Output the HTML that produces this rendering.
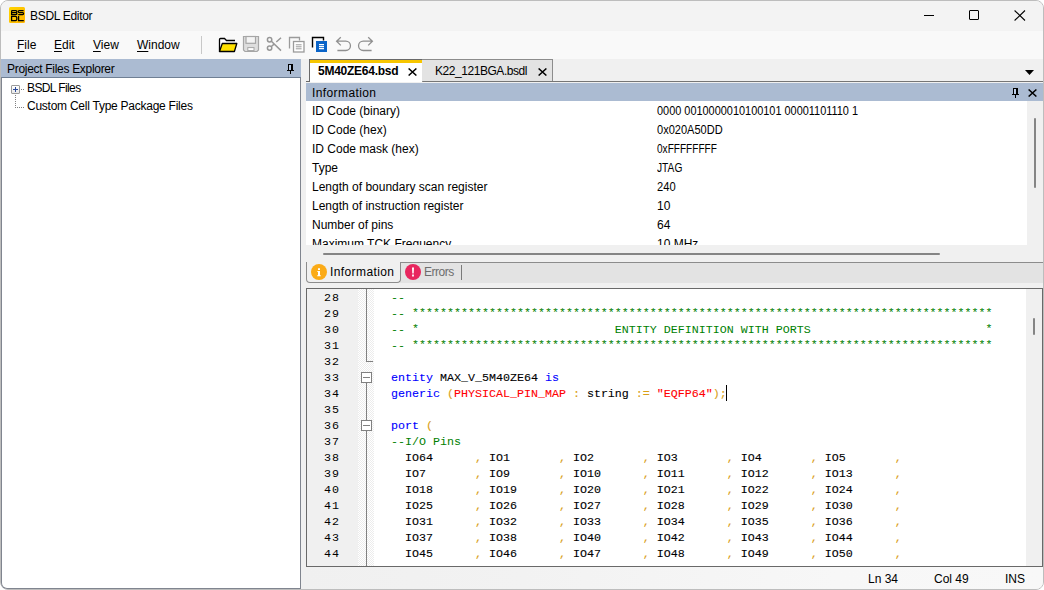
<!DOCTYPE html>
<html><head><meta charset="utf-8">
<style>
*{margin:0;padding:0;box-sizing:border-box}
html,body{width:1044px;height:590px;overflow:hidden;background:#fff}
body{font-family:"Liberation Sans",sans-serif;font-size:12px;color:#000;position:relative}
.a{position:absolute}
.t{position:absolute;white-space:nowrap;line-height:14px}
#win{left:0;top:0;width:1044px;height:590px;background:#f0f0f0;border:1px solid #bdbdbd;border-radius:8px;overflow:hidden}
#title{left:0;top:0;width:1044px;height:30px;background:#f3f3f3}
#menu{left:0;top:30px;width:1044px;height:28px;background:#f9f9f9}
.u{text-decoration:underline;text-underline-offset:1.5px}
.hdr{background:#abbbd2}
.mono{font-family:"Liberation Mono",monospace}
.code{font-size:11.67px;line-height:16px;color:#000;-webkit-text-stroke:0.1px}
.ln{-webkit-text-stroke:0}
.st{position:relative;top:-1px}
.g{color:#008000;-webkit-text-stroke:0}.k{color:#0000ff}.r{color:#ff0000}.o{color:#d9a018}
.chk{background:repeating-conic-gradient(#ececec 0 25%,#fff 0 50%) 0 0/2px 2px}
</style></head><body>
<div id="win" class="a">
  <div id="title" class="a"></div>
  <div id="menu" class="a"></div>
</div>
<!-- title -->
<svg class="a" style="left:9px;top:7px" width="16" height="16" viewBox="0 0 16 16">
  <defs><linearGradient id="ig" x1="0" y1="0" x2="1" y2="1"><stop offset="0" stop-color="#ffd500"/><stop offset="1" stop-color="#ffb300"/></linearGradient></defs>
  <rect x="0" y="0" width="16" height="16" rx="1.5" fill="url(#ig)"/>
  <g fill="none" stroke="#000" stroke-width="1.25">
  <path d="M2.6 3.6H6.9Q7.9 3.6 7.9 4.6Q7.9 5.6 6.9 5.6H2.6M6.9 5.6Q7.9 5.6 7.9 6.6Q7.9 7.6 6.9 7.6H2.6V3.6"/>
  <path d="M14.6 3.6H10.2Q9.2 3.6 9.2 4.6Q9.2 5.6 10.2 5.6H13.6Q14.6 5.6 14.6 6.6Q14.6 7.6 13.6 7.6H9.2"/>
  <path d="M2.6 9.4H6.4Q7.8 9.4 7.8 10.8V12.2Q7.8 13.6 6.4 13.6H2.6Z"/>
  <path d="M9.6 9V13.6H14.8"/>
  </g>
</svg>
<div class="t" style="left:30px;top:9px;letter-spacing:-0.3px">BSDL Editor</div>
<!-- window controls -->
<div class="a" style="left:924px;top:15px;width:10px;height:1px;background:#000"></div>
<div class="a" style="left:969px;top:10px;width:10px;height:10px;border:1px solid #000;border-radius:1px"></div>
<svg class="a" style="left:1014px;top:10px" width="12" height="11" viewBox="0 0 12 11"><path d="M0.6 0.5L11 10.5M11 0.5L0.6 10.5" stroke="#000" stroke-width="1.1"/></svg>
<!-- menu -->
<div class="t" style="left:17px;top:38px"><span class="u">F</span>ile</div>
<div class="t" style="left:54px;top:38px"><span class="u">E</span>dit</div>
<div class="t" style="left:93px;top:38px"><span class="u">V</span>iew</div>
<div class="t" style="left:137px;top:38px"><span class="u">W</span>indow</div>
<div class="a" style="left:201px;top:36px;width:1px;height:18px;background:#c8c8c8"></div>

<!-- left panel -->
<div class="a hdr" style="left:1px;top:59px;width:300px;height:18px"></div>
<div class="t" style="left:7px;top:62px;letter-spacing:-0.3px">Project Files Explorer</div>
<div class="a" style="left:1px;top:77px;width:300px;height:512px;background:#fff;border:1px solid #80858f;border-top-color:#6f7f94;border-radius:0 0 0 6px"></div>
<div class="t" style="left:27px;top:81px;letter-spacing:-0.6px">BSDL Files</div>
<div class="t" style="left:27px;top:99px;letter-spacing:-0.25px">Custom Cell Type Package Files</div>

<!-- tab strip -->
<div class="a" style="left:309px;top:59px;width:114px;height:23px;background:#fff;border:1px solid #696969;border-bottom:none"></div>
<div class="a" style="left:310px;top:60px;width:112px;height:3px;background:#f7c600"></div>
<div class="t" style="left:318px;top:64px;font-weight:bold;letter-spacing:-0.25px">5M40ZE64.bsd</div>
<div class="a" style="left:422px;top:59px;width:131px;height:23px;background:#e3e3e3;border:1px solid #8c8c8c;border-left:none"></div>
<div class="t" style="left:435px;top:64px;letter-spacing:-0.45px">K22_121BGA.bsdl</div>
<div class="a" style="left:306px;top:81px;width:3px;height:1px;background:#696969"></div>
<div class="a" style="left:423px;top:81px;width:620px;height:1px;background:#767676"></div>

<!-- information panel -->
<div class="a hdr" style="left:306px;top:83px;width:737px;height:18px"></div>
<div class="t" style="left:312px;top:86px;letter-spacing:0.4px">Information</div>
<div class="a" style="left:306px;top:101px;width:721px;height:144px;background:#fff"></div>

<div class="a" style="left:306px;top:101px;width:721px;height:144px;overflow:hidden">
<div class="t" style="left:6px;top:3px">ID Code (binary)</div><div class="t" style="left:351px;top:3px;transform:scaleX(0.91);transform-origin:0 0">0000 0010000010100101 00001101110 1</div>
<div class="t" style="left:6px;top:22px">ID Code (hex)</div><div class="t" style="left:351px;top:22px;transform:scaleX(0.92);transform-origin:0 0">0x020A50DD</div>
<div class="t" style="left:6px;top:41px">ID Code mask (hex)</div><div class="t" style="left:351px;top:41px;transform:scaleX(0.84);transform-origin:0 0">0xFFFFFFFF</div>
<div class="t" style="left:6px;top:60px">Type</div><div class="t" style="left:351px;top:60px;transform:scaleX(0.85);transform-origin:0 0">JTAG</div>
<div class="t" style="left:6px;top:79px">Length of boundary scan register</div><div class="t" style="left:351px;top:79px;transform:scaleX(0.93);transform-origin:0 0">240</div>
<div class="t" style="left:6px;top:98px">Length of instruction register</div><div class="t" style="left:351px;top:98px;transform:scaleX(1);transform-origin:0 0">10</div>
<div class="t" style="left:6px;top:117px">Number of pins</div><div class="t" style="left:351px;top:117px;transform:scaleX(1);transform-origin:0 0">64</div>
<div class="t" style="left:6px;top:136px">Maximum TCK Frequency</div><div class="t" style="left:351px;top:136px;transform:scaleX(1);transform-origin:0 0">10 MHz</div>
</div>
<!-- bottom tabs -->
<div class="a" style="left:400px;top:262px;width:643px;height:1px;background:#8c8c8c"></div>
<div class="a" style="left:400px;top:263px;width:643px;height:20px;background:#e3e3e3"></div>
<div class="a" style="left:306px;top:262px;width:95px;height:21px;border:1px solid #8c8c8c;border-top:none;border-radius:0 0 4px 4px;background:#f0f0f0"></div>
<div class="t" style="left:330px;top:265px;letter-spacing:0.4px">Information</div>
<div class="t" style="left:424px;top:265px;color:#6d6d6d;letter-spacing:-0.5px">Errors</div>

<!-- code editor -->
<div class="a" style="left:306px;top:288px;width:737px;height:279px;background:#fff;border:1px solid #696969"></div>
<div class="a" style="left:307px;top:289px;width:51px;height:277px;background:#f0f0f0"></div>
<div class="a chk" style="left:358px;top:289px;width:16px;height:277px"></div>

<!-- code -->
<div class="a" style="left:307px;top:289px;width:719px;height:277px;overflow:hidden">
<pre class="a mono code" style="left:84px;top:1px"><span class="g">--</span>
<span class="g">-- <span class="st">***********************************************************************************</span></span>
<span class="g">-- <span class="st">*</span>                            ENTITY DEFINITION WITH PORTS                         <span class="st">*</span></span>
<span class="g">-- <span class="st">***********************************************************************************</span></span>

<span class="k">entity</span> MAX_V_5M40ZE64 <span class="k">is</span>
<span class="k">generic</span> <span class="o">(</span><span class="r">PHYSICAL_PIN_MAP</span> <span class="o">:</span> string <span class="o">:=</span> <span class="r">"EQFP64"</span><span class="o">);</span>

<span class="k">port</span> <span class="o">(</span>
<span class="g">--I/O Pins</span>
  IO64      <span class="o">,</span> IO1       <span class="o">,</span> IO2       <span class="o">,</span> IO3       <span class="o">,</span> IO4       <span class="o">,</span> IO5       <span class="o">,</span>
  IO7       <span class="o">,</span> IO9       <span class="o">,</span> IO10      <span class="o">,</span> IO11      <span class="o">,</span> IO12      <span class="o">,</span> IO13      <span class="o">,</span>
  IO18      <span class="o">,</span> IO19      <span class="o">,</span> IO20      <span class="o">,</span> IO21      <span class="o">,</span> IO22      <span class="o">,</span> IO24      <span class="o">,</span>
  IO25      <span class="o">,</span> IO26      <span class="o">,</span> IO27      <span class="o">,</span> IO28      <span class="o">,</span> IO29      <span class="o">,</span> IO30      <span class="o">,</span>
  IO31      <span class="o">,</span> IO32      <span class="o">,</span> IO33      <span class="o">,</span> IO34      <span class="o">,</span> IO35      <span class="o">,</span> IO36      <span class="o">,</span>
  IO37      <span class="o">,</span> IO38      <span class="o">,</span> IO40      <span class="o">,</span> IO42      <span class="o">,</span> IO43      <span class="o">,</span> IO44      <span class="o">,</span>
  IO45      <span class="o">,</span> IO46      <span class="o">,</span> IO47      <span class="o">,</span> IO48      <span class="o">,</span> IO49      <span class="o">,</span> IO50      <span class="o">,</span>
  IO51      <span class="o">,</span> IO52      <span class="o">,</span> IO53      <span class="o">,</span> IO54      <span class="o">,</span> IO55      <span class="o">,</span> IO56      <span class="o">,</span></pre>
<pre class="a mono code ln" style="left:0px;top:1px;width:33px;text-align:right;letter-spacing:1px">28
29
30
31
32
33
34
35
36
37
38
39
40
41
42
43
44
45</pre>
</div>
<!-- scrollbar -->
<div class="a" style="left:1026px;top:289px;width:16px;height:277px;background:#f0f0f0"></div>
<!-- fold margin -->
<div class="a" style="left:366px;top:289px;width:1px;height:73px;background:#808080"></div>
<div class="a" style="left:366px;top:361px;width:7px;height:1px;background:#808080"></div>
<div class="a" style="left:361px;top:372px;width:11px;height:11px;border:1px solid #808080;background:#fff"></div>
<div class="a" style="left:363px;top:377px;width:7px;height:1px;background:#808080"></div>
<div class="a" style="left:366px;top:383px;width:1px;height:37px;background:#808080"></div>
<div class="a" style="left:361px;top:420px;width:11px;height:11px;border:1px solid #808080;background:#fff"></div>
<div class="a" style="left:363px;top:425px;width:7px;height:1px;background:#808080"></div>
<div class="a" style="left:366px;top:431px;width:1px;height:135px;background:#808080"></div>
<!-- caret -->
<div class="a" style="left:726px;top:385px;width:1px;height:16px;background:#000"></div>
<div class="a" style="left:1033px;top:318px;width:2px;height:17px;background:#858585;border-radius:1px"></div>
<!-- status -->
<div class="a" style="left:301px;top:567px;width:742px;height:22px;background:linear-gradient(90deg,#f0f0f0 0%,#f2f2f2 30%,#f7f7f7 72%,#f8f8f8 100%);border-radius:0 0 7px 0"></div>
<div class="t" style="left:868px;top:572px">Ln 34</div>
<div class="t" style="left:934px;top:572px">Col 49</div>
<div class="t" style="left:1005px;top:572px">INS</div>
<!-- toolbar icons -->
<svg class="a" style="left:218px;top:37px" width="20" height="16" viewBox="0 0 20 16">
  <path d="M1.5 14.5V2.5Q1.5 1.5 2.5 1.5H6.5L8.5 3.5H17" fill="#fff" stroke="#000" stroke-width="1.3"/>
  <path d="M1.5 14.5L4.3 6.5H18.8L16.4 14.5Z" fill="#ffe100" stroke="#000" stroke-width="1.3" stroke-linejoin="round"/>
</svg>
<svg class="a" style="left:242px;top:35px" width="18" height="18" viewBox="0 0 18 18">
  <path d="M1.5 1.5H16.5V15L15 16.5H3L1.5 15Z" fill="#dedede" stroke="#a6a6a6" stroke-width="1.2"/>
  <rect x="4" y="1.5" width="9.5" height="6.8" fill="#f4f4f4" stroke="#a6a6a6" stroke-width="1.2"/>
  <rect x="5.8" y="12.6" width="6.2" height="3" fill="#fff" stroke="#a6a6a6" stroke-width="1"/>
</svg>
<svg class="a" style="left:266px;top:36px" width="16" height="16" viewBox="0 0 16 16">
  <g fill="none" stroke="#979797" stroke-width="1.5">
  <circle cx="3.6" cy="3.7" r="2.2"/><circle cx="3.6" cy="12.1" r="2.2"/>
  <path d="M5.4 5.3L15 14.6M5.4 10.5L8.6 7.6M10.3 6L15 1.7"/>
  </g>
</svg>
<svg class="a" style="left:288px;top:36px" width="17" height="17" viewBox="0 0 17 17">
  <path d="M1.5 12.5V1.5H11.5V4.5" fill="none" stroke="#9b9b9b" stroke-width="1.3"/>
  <rect x="5.5" y="5.5" width="10.5" height="10.5" fill="#fff" stroke="#9b9b9b" stroke-width="1.3"/>
  <path d="M7.8 8.8H13.6M7.8 10.8H13.6M7.8 12.8H13.6" stroke="#9b9b9b" stroke-width="1"/>
</svg>
<svg class="a" style="left:311px;top:36px" width="17" height="17" viewBox="0 0 17 17">
  <path d="M1.5 11.5V1.5H12.5V4.5" fill="none" stroke="#000" stroke-width="1.4"/>
  <rect x="5" y="5" width="11" height="11" fill="#0a64c8"/>
  <path d="M8 8.6H13M8 10.6H13M8 12.6H13" stroke="#fff" stroke-width="1.1"/>
</svg>
<svg class="a" style="left:335px;top:36px" width="17" height="16" viewBox="0 0 17 16">
  <path d="M5.8 1.2L1.6 5.2L5.8 9.4M1.6 5.2H10.8A4.65 4.65 0 0 1 10.8 14.5H2.4" fill="none" stroke="#8f8f8f" stroke-width="1.3"/>
</svg>
<svg class="a" style="left:357px;top:36px" width="17" height="16" viewBox="0 0 17 16">
  <path d="M11.2 1.2L15.4 5.2L11.2 9.4M15.4 5.2H6.2A4.65 4.65 0 0 0 6.2 14.5H14.6" fill="none" stroke="#8f8f8f" stroke-width="1.3"/>
</svg>
<!-- pins -->
<svg class="a" style="left:287px;top:64px" width="7" height="10" viewBox="0 0 7 10" shape-rendering="crispEdges">
  <path d="M1 0H6V6H1ZM0 6H7V7H0ZM3 7H4V10H3Z" fill="#000"/><rect x="2" y="1" width="2" height="5" fill="#bccce6"/>
</svg>
<svg class="a" style="left:1012px;top:88px" width="7" height="10" viewBox="0 0 7 10" shape-rendering="crispEdges">
  <path d="M1 0H6V6H1ZM0 6H7V7H0ZM3 7H4V10H3Z" fill="#000"/><rect x="2" y="1" width="2" height="5" fill="#bccce6"/>
</svg>
<svg class="a" style="left:1028px;top:89px" width="9" height="8" viewBox="0 0 9 8"><path d="M0.6 0.5L8.4 7.5M8.4 0.5L0.6 7.5" stroke="#000" stroke-width="1.5"/></svg>
<!-- tab close -->
<svg class="a" style="left:408px;top:68px" width="9" height="8" viewBox="0 0 9 8"><path d="M0.6 0.5L8.4 7.5M8.4 0.5L0.6 7.5" stroke="#000" stroke-width="1.5"/></svg>
<svg class="a" style="left:538px;top:68px" width="9" height="8" viewBox="0 0 9 8"><path d="M0.6 0.5L8.4 7.5M8.4 0.5L0.6 7.5" stroke="#000" stroke-width="1.5"/></svg>
<!-- dropdown -->
<svg class="a" style="left:1025px;top:70px" width="9" height="5" viewBox="0 0 9 5"><path d="M0 0H9L4.5 5Z" fill="#000"/></svg>
<!-- tree -->
<div class="a" style="left:11px;top:85px;width:9px;height:9px;border:1px solid #9a9a9a;border-radius:1px;background:linear-gradient(#fff,#e8e8e8)"></div>
<div class="a" style="left:13px;top:89px;width:5px;height:1px;background:#2b4a9a"></div>
<div class="a" style="left:15px;top:87px;width:1px;height:5px;background:#2b4a9a"></div>
<div class="a" style="left:21px;top:89px;width:4px;height:1px;background:repeating-linear-gradient(90deg,#808080 0 1px,transparent 1px 2px)"></div>
<div class="a" style="left:15px;top:95px;width:1px;height:13px;background:repeating-linear-gradient(180deg,#808080 0 1px,transparent 1px 2px)"></div>
<div class="a" style="left:16px;top:107px;width:9px;height:1px;background:repeating-linear-gradient(90deg,transparent 0 1px,#808080 1px 2px)"></div>
<!-- info scrollbars -->
<div class="a" style="left:1034px;top:118px;width:2px;height:70px;background:#858585;border-radius:1px"></div>
<div class="a" style="left:323px;top:253px;width:617px;height:2px;background:#858585;border-radius:1px"></div>
<!-- bottom tab icons -->
<svg class="a" style="left:311px;top:264px" width="16" height="16" viewBox="0 0 16 16">
  <circle cx="8" cy="8" r="8" fill="#fbab17"/>
  <path d="M7 4.2H9V5.9H7ZM6.3 7H9V11.2H9.8V12.3H6.2V11.2H7V8.1H6.3Z" fill="#fff"/>
</svg>
<svg class="a" style="left:405px;top:264px" width="16" height="16" viewBox="0 0 16 16">
  <circle cx="8" cy="8" r="8" fill="#e8265e"/>
  <path d="M7 3.4H9L8.7 9.4H7.3ZM7.1 10.6H8.9V12.4H7.1Z" fill="#fff"/>
</svg>
<div class="a" style="left:461px;top:265px;width:1px;height:15px;background:#7a7a7a"></div>
</body></html>
